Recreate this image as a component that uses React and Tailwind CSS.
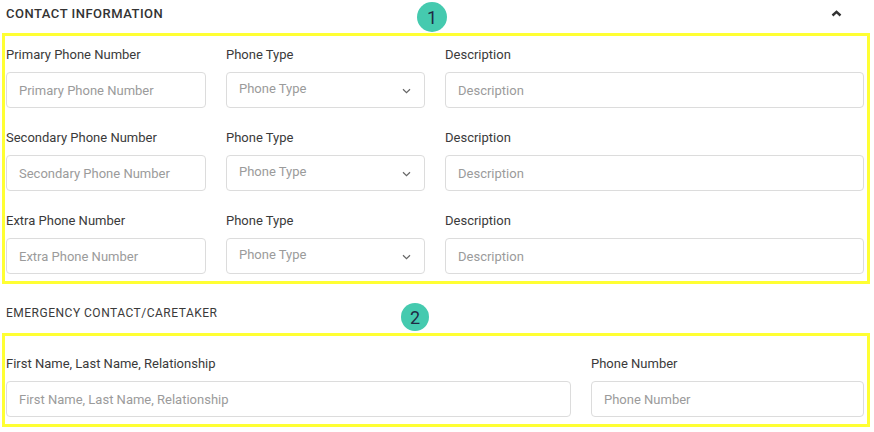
import React from 'react';

const rows = [
    { label: 'Primary Phone Number' },
    { label: 'Secondary Phone Number' },
    { label: 'Extra Phone Number' },
];

const Field = ({ label, children }) => (
    <div className="flex flex-col">
        <label className="text-[13px] leading-[18px] text-[#3a3a3a] whitespace-nowrap">{label}</label>
        <div className="mt-[8px]">{children}</div>
    </div>
);

const TextInput = ({ placeholder }) => (
    <input
        placeholder={placeholder}
        className="h-9 w-full rounded-[4px] border border-[#dcdcdc] bg-white px-3 text-[13px] text-[#333] outline-none placeholder:text-[#9b9b9b]"
    />
);

const PhoneTypeSelect = () => (
    <div className="flex h-9 w-full items-center justify-between rounded-[4px] border border-[#dcdcdc] bg-white pl-3 pr-[13px]">
        <span className="-mt-[2px] text-[13px] text-[#9b9b9b]">Phone Type</span>
        <svg width="9" height="6" viewBox="0 0 9 6" className="mt-[1px]">
            <path d="M1 1.2 L4.5 4.6 L8 1.2" fill="none" stroke="#666" strokeWidth="1.2" />
        </svg>
    </div>
);

const Badge = ({ n, className }) => (
    <div className={`absolute flex items-center justify-center rounded-full bg-[#45caaf] text-[18px] text-[#1f2a44] ${className}`}>
        {n}
    </div>
);

export default function App() {
    return (
        <div className="relative w-[874px] h-[432px] bg-white font-['Roboto',sans-serif] overflow-hidden">
            {/* section 1 header */}
            <div className="flex h-[33px] items-center justify-between pl-[6px] pr-[32px]">
                <h2 className="-mt-[5px] text-[13px] font-medium tracking-[0.5px] text-[#333]">CONTACT INFORMATION</h2>
                <svg width="11" height="7" viewBox="0 0 11 7" className="-mt-[7px]">
                    <path d="M1.5 5.5 L5.5 1.8 L9.5 5.5" fill="none" stroke="#333" strokeWidth="2.4" />
                </svg>
            </div>

            <div className="ml-[2px] w-[868px] border-[3px] border-[#ffff33] pl-[1px] pr-[3px] pt-[10px] pb-[7px]">
                <div className="flex flex-col gap-y-[21px]">
                    {rows.map(r => (
                        <div key={r.label} className="grid grid-cols-[200px_199px_1fr] gap-x-5">
                            <Field label={r.label}><TextInput placeholder={r.label} /></Field>
                            <Field label="Phone Type"><PhoneTypeSelect /></Field>
                            <Field label="Description"><TextInput placeholder="Description" /></Field>
                        </div>
                    ))}
                </div>
            </div>

            {/* section 2 header */}
            <div className="flex h-[49px] items-end pb-[12px] pl-[6px]">
                <h2 className="text-[12px] leading-4 tracking-[0.5px] text-[#3a3a3a]">EMERGENCY CONTACT/CARETAKER</h2>
            </div>

            <div className="ml-[2px] w-[868px] border-[3px] border-[#ffff33] pl-[1px] pr-[3px] pt-[19px] pb-[7px]">
                <div className="grid grid-cols-[565px_1fr] gap-x-5">
                    <Field label="First Name, Last Name, Relationship">
                        <TextInput placeholder="First Name, Last Name, Relationship" />
                    </Field>
                    <Field label="Phone Number"><TextInput placeholder="Phone Number" /></Field>
                </div>
            </div>

            <Badge n="1" className="left-[417px] top-[2px] h-[30px] w-[30px]" />
            <Badge n="2" className="left-[401px] top-[303px] h-[28px] w-[28px]" />
        </div>
    );
}
